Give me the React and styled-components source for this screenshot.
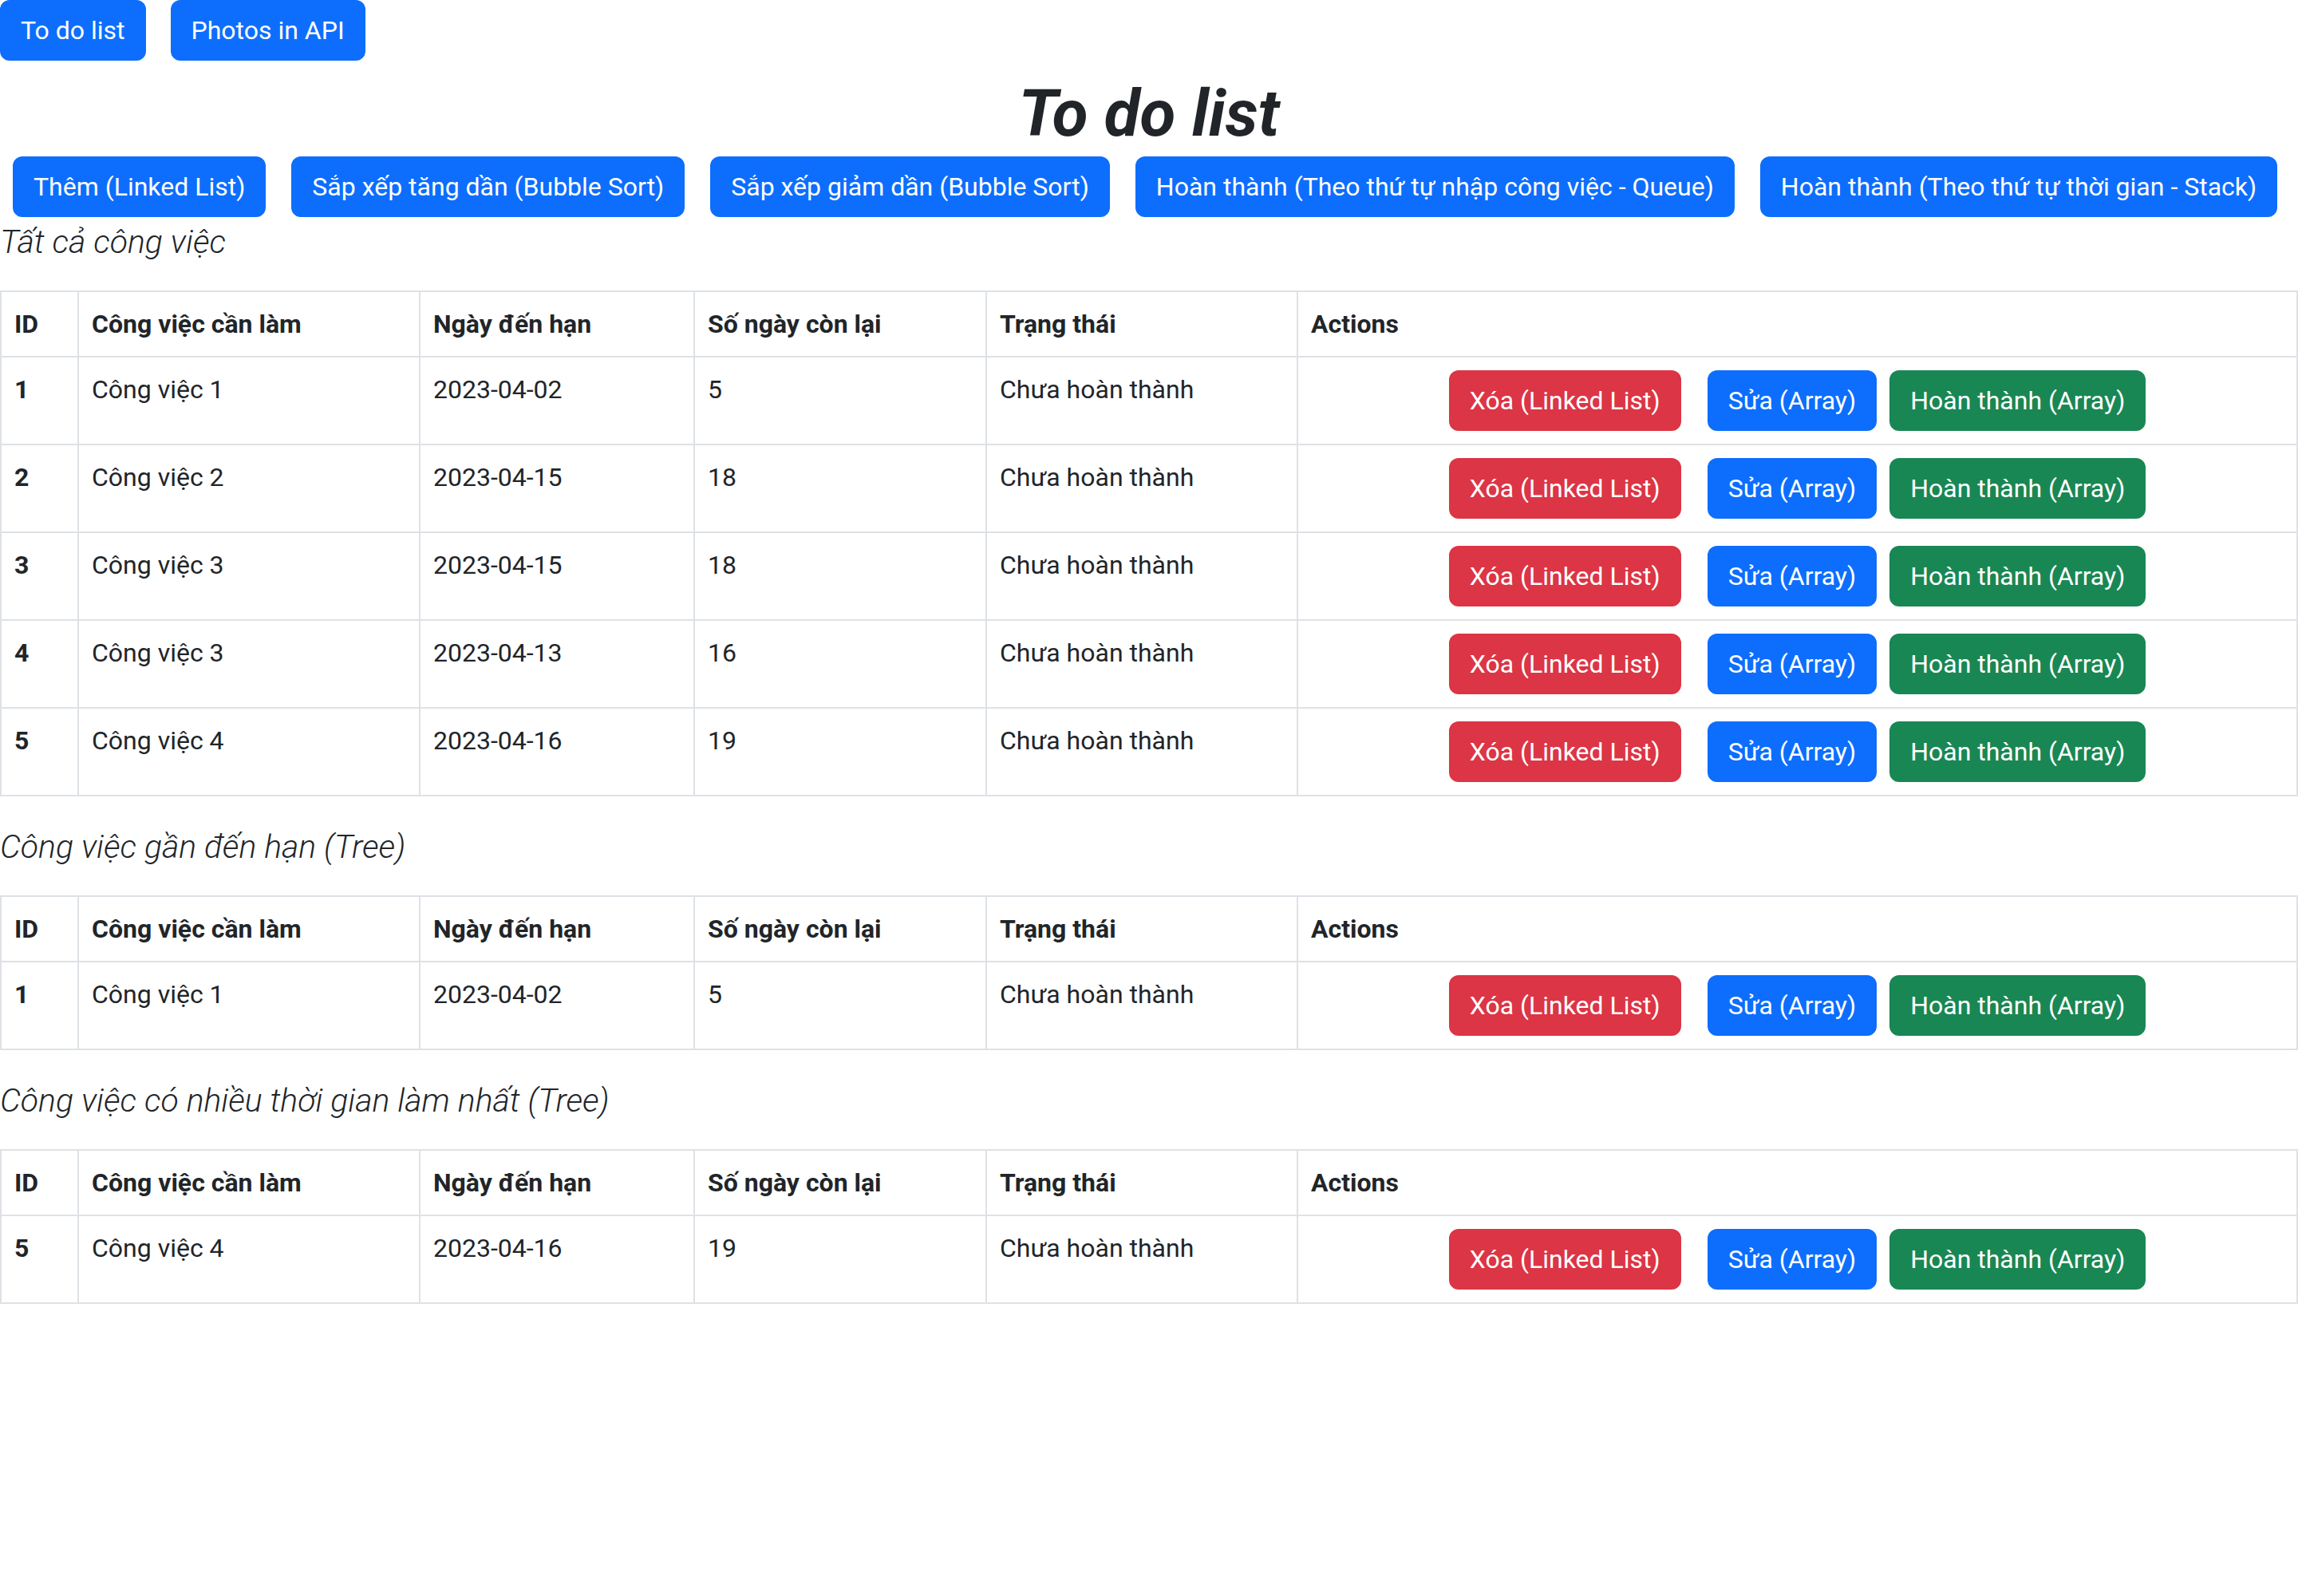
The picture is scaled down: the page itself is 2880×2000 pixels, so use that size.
import styled, { createGlobalStyle } from 'styled-components';

const TASKS = [
  { id: 1, name: 'Công việc 1', due: '2023-04-02', left: 5 },
  { id: 2, name: 'Công việc 2', due: '2023-04-15', left: 18 },
  { id: 3, name: 'Công việc 3', due: '2023-04-15', left: 18 },
  { id: 4, name: 'Công việc 3', due: '2023-04-13', left: 16 },
  { id: 5, name: 'Công việc 4', due: '2023-04-16', left: 19 },
];

const COLUMNS = [
  { label: 'ID', width: 97 },
  { label: 'Công việc cần làm', width: 428 },
  { label: 'Ngày đến hạn', width: 344 },
  { label: 'Số ngày còn lại', width: 366 },
  { label: 'Trạng thái', width: 390 },
  { label: 'Actions' },
];

const TaskTable = ({ rows }) => (
  <Table>
    <colgroup>
      {COLUMNS.map(c => (
        <col key={c.label} style={c.width ? { width: c.width } : undefined} />
      ))}
    </colgroup>
    <thead>
      <tr>
        {COLUMNS.map(c => (
          <HeadCell key={c.label}>{c.label}</HeadCell>
        ))}
      </tr>
    </thead>
    <tbody>
      {rows.map(t => (
        <tr key={t.id}>
          <HeadCell>{t.id}</HeadCell>
          <Cell>{t.name}</Cell>
          <Cell>{t.due}</Cell>
          <Cell>{t.left}</Cell>
          <Cell>Chưa hoàn thành</Cell>
          <Cell>
            <ActionGroup>
              <Button $variant="danger" $spaced>
                Xóa (Linked List)
              </Button>
              <Button>Sửa (Array)</Button>
              <Button $variant="success">Hoàn thành (Array)</Button>
            </ActionGroup>
          </Cell>
        </tr>
      ))}
    </tbody>
  </Table>
);

const App = () => {
  const nearest = TASKS.filter(t => t.id === 1);
  const longest = TASKS.filter(t => t.id === 5);

  return (
    <>
      <GlobalStyle />
      <NavBar>
        <Button>To do list</Button>
        <Button>Photos in API</Button>
      </NavBar>
      <Title>To do list</Title>
      <Toolbar>
        <Button>Thêm (Linked List)</Button>
        <Button>Sắp xếp tăng dần (Bubble Sort)</Button>
        <Button>Sắp xếp giảm dần (Bubble Sort)</Button>
        <Button>Hoàn thành (Theo thứ tự nhập công việc - Queue)</Button>
        <Button>Hoàn thành (Theo thứ tự thời gian - Stack)</Button>
      </Toolbar>
      <SectionTitle>Tất cả công việc</SectionTitle>
      <TaskTable rows={TASKS} />
      <SectionTitle>Công việc gần đến hạn (Tree)</SectionTitle>
      <TaskTable rows={nearest} />
      <SectionTitle>Công việc có nhiều thời gian làm nhất (Tree)</SectionTitle>
      <TaskTable rows={longest} />
    </>
  );
};

export default App;

const GlobalStyle = createGlobalStyle`
  body {
    margin: 0;
    background: #fff;
    color: #212529;
    font-family: Roboto, "Noto Sans", sans-serif;
    font-size: 32px;
    line-height: 1.5;
  }
`;

const COLORS = {
  primary: '#0d6efd',
  danger: '#dc3545',
  success: '#198754',
};

const Button = styled.button`
  display: inline-block;
  padding: 12px 24px;
  margin-right: ${p => (p.$spaced ? '17px' : '0')};
  font-family: inherit;
  font-size: 32px;
  line-height: 48px;
  color: #fff;
  background: ${p => COLORS[p.$variant || 'primary']};
  border: 2px solid ${p => COLORS[p.$variant || 'primary']};
  border-radius: 12px;
  white-space: nowrap;
  cursor: pointer;
`;

const NavBar = styled.div`
  display: flex;
  gap: 31px;
`;

const Title = styled.h1`
  margin: 18px 0 6px;
  font-size: 82px;
  font-weight: 700;
  font-style: italic;
  line-height: 96px;
  text-align: center;
`;

const Toolbar = styled.div`
  display: flex;
  gap: 32px;
  padding-left: 16px;
`;

const SectionTitle = styled.p`
  margin: 0 0 32px;
  padding-top: 3px;
  font-size: 41px;
  font-weight: 300;
  font-style: italic;
  line-height: 57px;
`;

const Table = styled.table`
  width: 100%;
  margin-bottom: 32px;
  border-collapse: collapse;
  table-layout: fixed;
`;

const HeadCell = styled.th`
  padding: 16px;
  border: 2px solid #dee2e6;
  font-weight: 700;
  text-align: left;
  vertical-align: top;
`;

const Cell = styled.td`
  padding: 16px;
  border: 2px solid #dee2e6;
  vertical-align: top;
`;

const ActionGroup = styled.div`
  display: flex;
  justify-content: center;
  gap: 16px;
`;
